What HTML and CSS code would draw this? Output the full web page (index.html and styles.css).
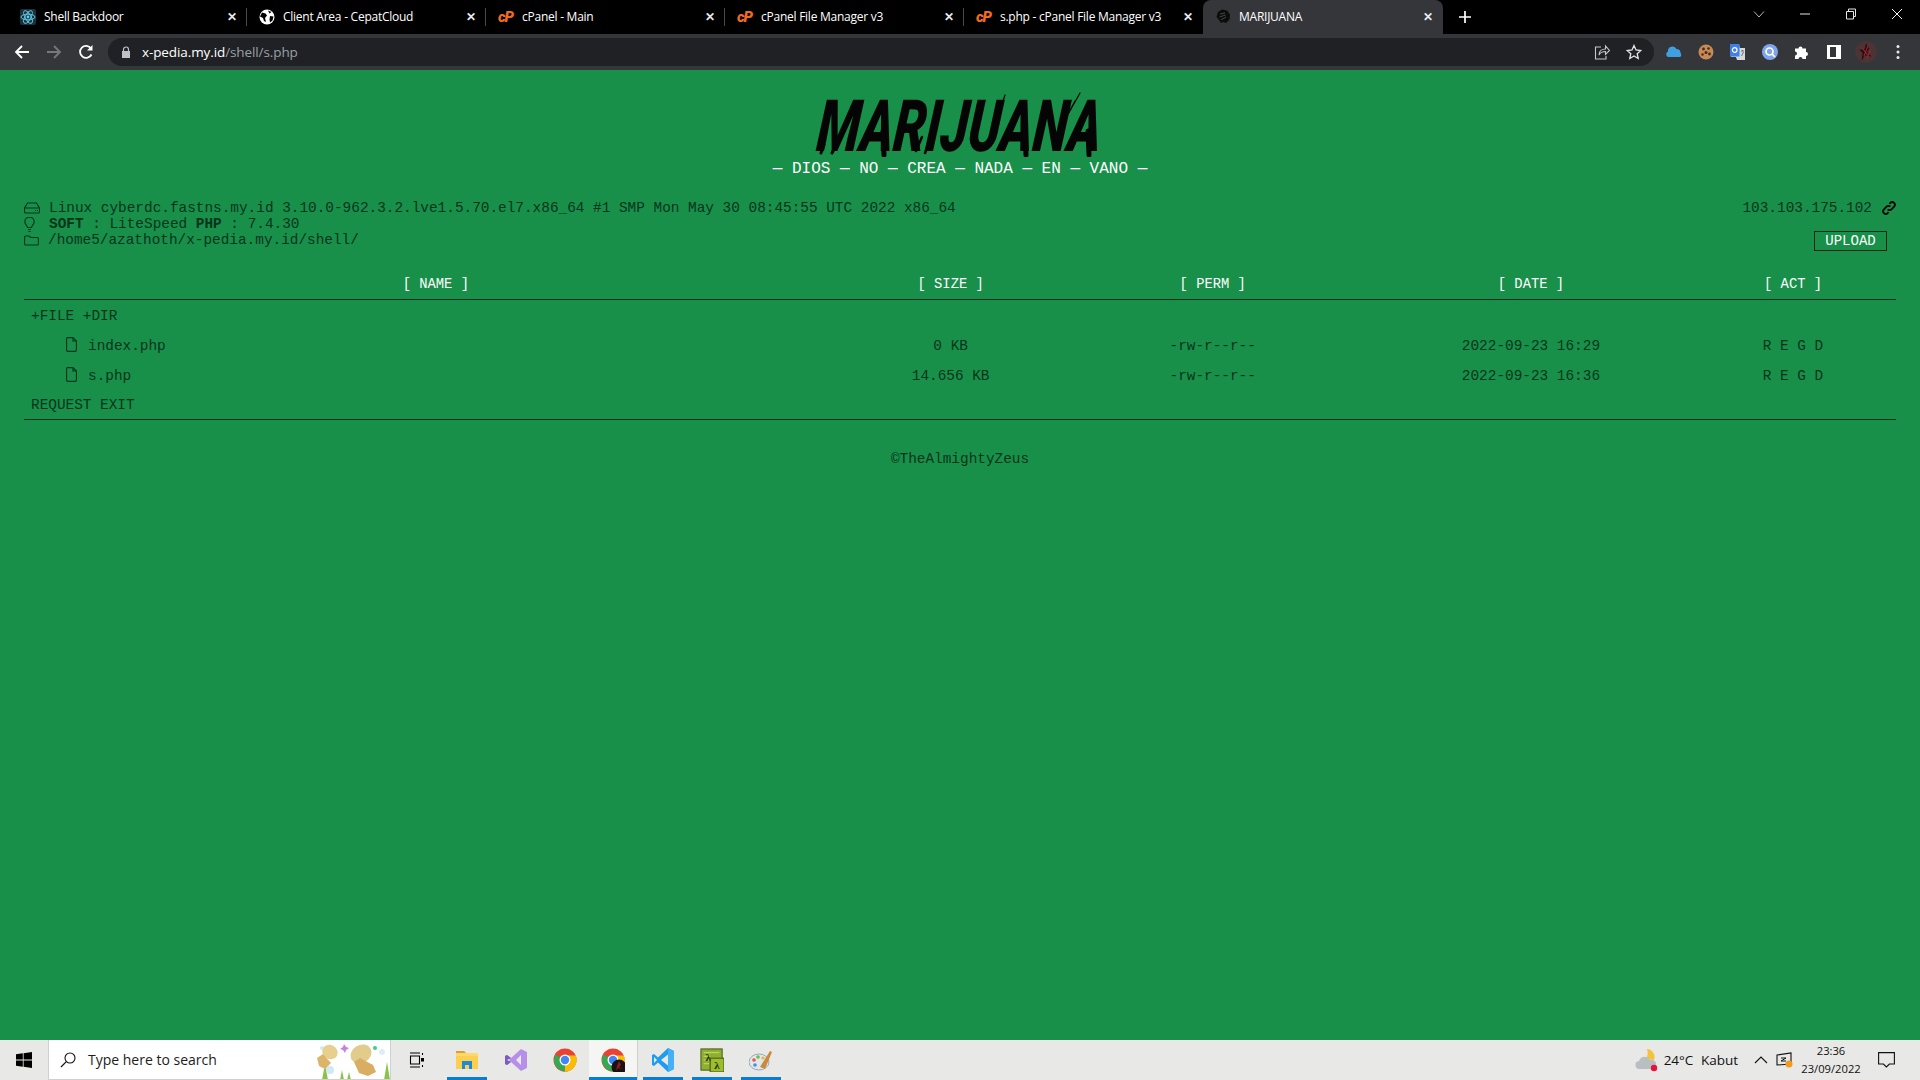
FILE: index.html
```html
<!DOCTYPE html>
<html lang="en">
<head>
<meta charset="utf-8">
<title>MARIJUANA</title>
<link rel="stylesheet" href="styles.css">
</head>
<body>
<div class="chrome">
  <div class="tabstrip">
    <div class="tab">
      <svg class="fav" viewBox="0 0 16 16"><rect width="16" height="16" rx="2" fill="#20303a"/><g fill="none" stroke="#5fd0ee" stroke-width=".9"><ellipse cx="8" cy="8" rx="7" ry="2.8"/><ellipse cx="8" cy="8" rx="7" ry="2.8" transform="rotate(60 8 8)"/><ellipse cx="8" cy="8" rx="7" ry="2.8" transform="rotate(120 8 8)"/></g><circle cx="8" cy="8" r="1.4" fill="#5fd0ee"/></svg>
      <span class="tab-title">Shell Backdoor</span><span class="tab-x">✕</span>
    </div>
    <div class="tab">
      <svg class="fav" viewBox="0 0 16 16"><circle cx="8" cy="8" r="7.5" fill="#fff"/><path d="M3 3.5l3.5 1 1.5 2-2 2.5 1 4-2-1-1-3-3-1.500zM9 1.500l3.500 1.500-2 1.500zM11 7l3.500 .5-1 4-2.500 2-.5-3z" fill="#000"/></svg>
      <span class="tab-title">Client Area - CepatCloud</span><span class="tab-x">✕</span>
    </div>
    <div class="tab">
      <span class="fav cp">cP</span>
      <span class="tab-title">cPanel - Main</span><span class="tab-x">✕</span>
    </div>
    <div class="tab">
      <span class="fav cp">cP</span>
      <span class="tab-title">cPanel File Manager v3</span><span class="tab-x">✕</span>
    </div>
    <div class="tab tab-last">
      <span class="fav cp">cP</span>
      <span class="tab-title">s.php - cPanel File Manager v3</span><span class="tab-x">✕</span>
    </div>
    <div class="tab tab-active">
      <svg class="fav" viewBox="0 0 16 16"><path d="M3 3l4-2.500 5 1 3 4-.5 5-3.500 3.500-3-1-2 1-2-3-2.500-3z" fill="#0c0c0c"/><path d="M5 5l5-1M4.500 8l6-2M6 11l5-3" stroke="#555" stroke-width=".8"/></svg>
      <span class="tab-title">MARIJUANA</span><span class="tab-x">✕</span>
    </div>
    <svg class="newtab" viewBox="0 0 12 12"><path d="M6 0v12M0 6h12" stroke="#fff" stroke-width="1.700"/></svg>
    <div class="winctl">
      <svg class="win-ico" viewBox="0 0 12 12"><path d="M1 3.500l5 5.500 5-5.500" fill="none" stroke="#c8c8c8" stroke-width=".9"/></svg>
      <svg class="win-ico" viewBox="0 0 12 12"><path d="M1 6h10" stroke="#e6e6e6" stroke-width="1"/></svg>
      <svg class="win-ico" viewBox="0 0 12 12"><path d="M1.500 3.500h7v7.500h-7zM3.500 3.500v-2.500h7v7.500h-2" fill="none" stroke="#e6e6e6" stroke-width="1"/></svg>
      <svg class="win-ico" viewBox="0 0 12 12"><path d="M1 1l10 10M11 1l-10 10" stroke="#f0f0f0" stroke-width="1"/></svg>
    </div>
  </div>
  <div class="toolbar">
    <svg class="nav-ico" viewBox="0 0 16 16"><path d="M15 8H2M8 2L2 8l6 6" fill="none" stroke="#fff" stroke-width="1.800"/></svg>
    <svg class="nav-ico" viewBox="0 0 16 16"><path d="M1 8h13M8 2l6 6-6 6" fill="none" stroke="#77787a" stroke-width="1.800"/></svg>
    <svg class="nav-ico" viewBox="0 0 16 16"><path d="M13.500 10.500A6 6 0 1 1 13 4.500" fill="none" stroke="#fff" stroke-width="1.800"/><path d="M14.500 1v5.500H9z" fill="#fff"/></svg>
    <div class="omnibox">
      <svg class="lock" viewBox="0 0 10 12"><path d="M2.500 5V3.500a2.500 2.500 0 0 1 5 0V5" fill="none" stroke="#bdc1c6" stroke-width="1.200"/><path d="M1 5h8v7H1z" fill="#bdc1c6"/></svg>
      <span class="url"><span class="url-host">x-pedia.my.id</span>/shell/s.php</span>
      <svg class="omni-ico omni-share" viewBox="0 0 16 16"><path d="M7 3H1.500v12H12v-3" fill="none" stroke="#c4c7c5" stroke-width="1.100"/><path d="M5 11c0-4 3-6 6.500-6V2l4 4.500-4 4V7.500C8.500 7.500 6 9 5 11z" fill="none" stroke="#c4c7c5" stroke-width="1.100"/></svg>
      <svg class="omni-ico" viewBox="0 0 16 16"><path d="M8 1.500l2 4.500 4.800 .5-3.600 3.200 1 4.800L8 12l-4.200 2.500 1-4.800L1.200 6.500 6 6z" fill="none" stroke="#e3e3e3" stroke-width="1.300"/></svg>
    </div>
    <div class="exts">
      <svg class="ext" viewBox="0 0 16 16"><path d="M2 13a3 3 0 0 1 0-5.500A4.500 4.500 0 0 1 10.500 5 4 4 0 0 1 14.500 9 2.500 2.500 0 0 1 14 13z" fill="#3f9fe0"/></svg>
      <svg class="ext" viewBox="0 0 16 16"><circle cx="8" cy="8" r="7.500" fill="#c68958"/><g fill="#4a2c18"><circle cx="5.500" cy="5" r="1.400"/><circle cx="10.500" cy="4.500" r="1.300"/><circle cx="8" cy="8.500" r="1.500"/><circle cx="4.500" cy="10.500" r="1.200"/><circle cx="11.500" cy="10" r="1.400"/></g></svg>
      <svg class="ext" viewBox="0 0 16 16"><path d="M1 1h8l1 3h5v12H7l-1-3H1z" fill="#d5d8da"/><path d="M0 0h9.500v12.500H0z" fill="#3f7fe8"/><circle cx="4.700" cy="6" r="2.300" fill="none" stroke="#fff" stroke-width="1.200"/><path d="M11 7h3M12.500 6v1M11.500 12l2-4" stroke="#666" stroke-width=".9"/></svg>
      <svg class="ext" viewBox="0 0 16 16"><circle cx="8" cy="8" r="8" fill="#7ea4ee"/><circle cx="7.500" cy="7.500" r="3.500" fill="none" stroke="#fff" stroke-width="1.700"/><path d="M10 10l3 3" stroke="#fff" stroke-width="1.700"/></svg>
      <svg class="ext" viewBox="0 0 16 16"><path d="M1 4.500h3.500a2 2 0 1 1 4 0H12V8a2 2 0 1 1 0 4v3H8.500a2 2 0 1 0-4 0H1v-3.500a2 2 0 1 0 0-4z" fill="#fff"/></svg>
      <svg class="ext" viewBox="0 0 16 16"><path d="M1 1h14v14H1z" fill="#fff"/><path d="M4 3h6v10H4z" fill="#35363a"/></svg>
      <svg class="ext ext-avatar" viewBox="0 0 20 20"><circle cx="10" cy="10" r="10" fill="#4a3436"/><path d="M10 2l3 5-2 3 4 4-6-1-3 5 1-7-3-3 5-1z" fill="#2a0c10"/><path d="M12 4l-4 10M6 6l6 7M14 8l-3 8" stroke="#a0242c" stroke-width="1"/></svg>
      <svg class="ext ext-dots" viewBox="0 0 4 16"><g fill="#e8eaed"><circle cx="2" cy="2.500" r="1.500"/><circle cx="2" cy="8" r="1.500"/><circle cx="2" cy="13.500" r="1.500"/></g></svg>
    </div>
  </div>
</div>

<main class="page">
  <header class="brand">
    <div class="logo-wrap">
      <h1 class="logo">MARIJUANA</h1>
      <svg class="streaks" viewBox="0 0 300 70">
        <g fill="none" stroke="#050505" stroke-linecap="round">
          <path d="M14 58l-3 8M26 58l-4 8" stroke-width="3"/>
          <path d="M73 44l1 24" stroke-width="5"/>
          <path d="M123 46l-8 20M112 50l-6 14" stroke-width="2.500"/>
          <path d="M195 8l-12 36M191 14l-9 28" stroke-width="1.200"/>
          <path d="M215 44l1 24" stroke-width="5"/>
          <path d="M278 44l1 24" stroke-width="5"/>
          <path d="M270 6l-18 32M265 14l-12 22" stroke-width="1.200"/>
        </g>
      </svg>
    </div>
    <p class="tagline">— DIOS — NO — CREA — NADA — EN — VANO —</p>
  </header>

  <section class="info">
    <div class="info-left">
      <div class="info-line">
        <svg class="i-hdd" viewBox="0 0 16 12"><path d="M3.500 1h9l3 5v4a1 1 0 0 1-1 1H1.500a1 1 0 0 1-1-1V6zM.5 6h15" fill="none" stroke="#06351b" stroke-width="1.100"/><path d="M11 8.500h1M13 8.500h1" stroke="#06351b"/></svg>
        <span>Linux cyberdc.fastns.my.id 3.10.0-962.3.2.lve1.5.70.el7.x86_64 #1 SMP Mon May 30 08:45:55 UTC 2022 x86_64</span>
      </div>
      <div class="info-line">
        <svg class="i-bulb" viewBox="0 0 11 15"><path d="M3.500 10.500C3 8 .8 7.500.8 4.800a4.700 4.700 0 0 1 9.400 0c0 2.700-2.200 3.200-2.700 5.700zM4 12.500h3M4.500 14.500h2" fill="none" stroke="#06351b" stroke-width="1.100"/></svg>
        <span><b>SOFT</b> : LiteSpeed <b>PHP</b> : 7.4.30</span>
      </div>
      <div class="info-line">
        <svg class="i-folder" viewBox="0 0 15 11"><path d="M.6 2a1 1 0 0 1 1-1h3.500l1.500 1.500h6.800a1 1 0 0 1 1 1v5.500a1 1 0 0 1-1 1H1.600a1 1 0 0 1-1-1z" fill="none" stroke="#06351b" stroke-width="1.100"/></svg>
        <span class="path">/home5/azathoth/x-pedia.my.id/shell/</span>
      </div>
    </div>
    <div class="info-right">
      <div class="ip">103.103.175.102
        <svg class="i-link" viewBox="0 0 16 16"><g fill="none" stroke="#000" stroke-width="2"><path d="M6.500 9.500a3 3 0 0 0 4.300 0l3-3a3 3 0 0 0-4.300-4.300l-1 1"/><path d="M9.500 6.500a3 3 0 0 0-4.300 0l-3 3a3 3 0 0 0 4.300 4.300l1-1"/></g></svg>
      </div>
      <button class="upload">UPLOAD</button>
    </div>
  </section>

  <table class="files">
    <thead>
      <tr>
        <th class="c-name">[ NAME ]</th>
        <th class="c-size">[ SIZE ]</th>
        <th class="c-perm">[ PERM ]</th>
        <th class="c-date">[ DATE ]</th>
        <th class="c-act">[ ACT ]</th>
      </tr>
    </thead>
    <tbody>
      <tr><td class="left" colspan="5">+FILE +DIR</td></tr>
      <tr>
        <td class="left"><span class="fname"><svg class="i-file" viewBox="0 0 11 15"><path d="M1.500.6h5.500l3.400 3.400v9a1.400 1.400 0 0 1-1.400 1.400H1.500A1.400 1.400 0 0 1 .6 13V1.500A1 1 0 0 1 1.500.6zM7 .6V4h3.400" fill="none" stroke="#06351b" stroke-width="1.100"/></svg>index.php</span></td>
        <td>0 KB</td><td>-rw-r--r--</td><td>2022-09-23 16:29</td><td>R E G D</td>
      </tr>
      <tr>
        <td class="left"><span class="fname"><svg class="i-file" viewBox="0 0 11 15"><path d="M1.500.6h5.500l3.400 3.400v9a1.400 1.400 0 0 1-1.400 1.400H1.500A1.400 1.400 0 0 1 .6 13V1.500A1 1 0 0 1 1.500.6zM7 .6V4h3.400" fill="none" stroke="#06351b" stroke-width="1.100"/></svg>s.php</span></td>
        <td>14.656 KB</td><td>-rw-r--r--</td><td>2022-09-23 16:36</td><td>R E G D</td>
      </tr>
      <tr><td class="left" colspan="5">REQUEST EXIT</td></tr>
    </tbody>
  </table>

  <footer class="credit">©TheAlmightyZeus</footer>
</main>

<div class="taskbar">
  <div class="start"><svg class="win-logo" viewBox="0 0 16 16"><path d="M0 2.300l6.800-1v6.200H0zM7.600 1.200L16 0v7.500H7.600zM0 8.400h6.800v6.300l-6.800-1zM7.600 8.400H16V16l-8.400-1.200z" fill="#000"/></svg></div>
  <div class="search">
    <svg class="search-ico" viewBox="0 0 16 16"><circle cx="10" cy="6" r="5" fill="none" stroke="#111" stroke-width="1.100"/><path d="M6.300 9.700L1 15" stroke="#111" stroke-width="1.200"/></svg>
    <span class="search-text">Type here to search</span>
    <svg class="doodle" viewBox="0 0 76 40">
      <path d="M8 40l3-16 3 16zM70 40l3-18 3 18zM26 40l2-10 2 10zM33 40l2-8 2 8z" fill="#8bc34a"/>
      <circle cx="16" cy="30" r="4" fill="#cfe9f5"/><circle cx="8" cy="8" r="2" fill="#cfe9f5"/><circle cx="68" cy="12" r="3" fill="#dbeef8"/><circle cx="61" cy="8" r="2" fill="#3fd080"/>
      <path d="M30 4l2 3 3 1-3 2-1 3-2-3-3-1 3-2z" fill="#c77ee0"/>
      <ellipse cx="16" cy="12" rx="8" ry="7" fill="#e7d08f" transform="rotate(30 16 12)"/>
      <path d="M3 18l6-4 8 9-6 6-6-3zM9 24l5 2" fill="#dcb56a"/>
      <ellipse cx="47" cy="14" rx="11" ry="9" fill="#e2cc8c" transform="rotate(-30 47 14)"/>
      <path d="M40 22l6-4 13 7 3 7-8 4-9-3z" fill="#d9ae62"/>
    </svg>
  </div>
  <div class="tasks">
    <div class="task task-plain"><svg class="task-ico" viewBox="0 0 16 16"><path d="M2 1h10M2 15h10M2.500 4h9v8h-9zM14.500 1v2M14.500 13v2" fill="none" stroke="#000" stroke-width="1.100"/><rect x="13" y="6" width="3" height="3.500" fill="#000"/></svg></div>
    <div class="task task-on"><svg class="task-ico ico-big" viewBox="0 0 24 24"><path d="M1 3h8l2 2h12v16H1z" fill="#ffd76a"/><path d="M1 3h8l2 2H1z" fill="#d9a033"/><path d="M1 8h22v13H1z" fill="#fbd04f"/><path d="M7 21v-8h10v8h-3v-4h-4v4z" fill="#1e8ad6"/></svg></div>
    <div class="task"><svg class="task-ico ico-big" viewBox="0 0 24 24"><path d="M17 1l6 3v16l-6 3-10-9-4 3-2-1V8l2-1 4 3z" fill="#b88fe8"/><path d="M17 7l-5 5 5 5zM3 9v6l3-3z" fill="#e8e8e6"/><path d="M1 8l2-1 4 3-4 2 4 2-4 3-2-1z" fill="#7d5cc0"/></svg></div>
    <div class="task"><svg class="task-ico ico-big" viewBox="0 0 24 24"><circle cx="12" cy="12" r="11.500" fill="#e94235"/><path d="M12 12L2.400 6.500A11.500 11.500 0 0 0 12 23.500z" fill="#34a853"/><path d="M12 12v11.500A11.500 11.500 0 0 0 22.700 7.500H12z" fill="#fbbc04"/><circle cx="12" cy="12" r="5.500" fill="#fff"/><circle cx="12" cy="12" r="4.200" fill="#4285f4"/></svg></div>
    <div class="task task-active"><svg class="task-ico ico-big" viewBox="0 0 24 24"><circle cx="12" cy="12" r="11.500" fill="#e94235"/><path d="M12 12L2.400 6.500A11.500 11.500 0 0 0 12 23.500z" fill="#34a853"/><path d="M12 12v11.500A11.500 11.500 0 0 0 22.700 7.500H12z" fill="#fbbc04"/><circle cx="12" cy="12" r="5.500" fill="#fff"/><circle cx="12" cy="12" r="4.200" fill="#4285f4"/><circle cx="18" cy="19" r="7.500" fill="#1b1113"/><path d="M18 13l2 4-2 2 3 2-4-1-2 3 1-5z" fill="#8a1c24"/></svg></div>
    <div class="task task-on"><svg class="task-ico ico-big" viewBox="0 0 24 24"><path d="M17 0l6 3v18l-6 3L7 14.500 3 18l-2-1V7l2-1 4 3.500z" fill="#1f9cf0"/><path d="M17 6.500L10 12l7 5.500z" fill="#e8e8e6"/><path d="M3 9v6l3-3z" fill="#e8e8e6"/><path d="M17 0l6 3v18l-6 3z" fill="#45b0f5"/></svg></div>
    <div class="task task-on"><svg class="task-ico ico-big" viewBox="0 0 26 26"><rect x="1" y="1" width="23" height="23" fill="#8fb02c" stroke="#3f4d18"/><path d="M4 5h17M4 9h7M4 13h6M4 17h6" stroke="#c9dc72"/><rect x="11" y="11" width="15" height="15" fill="#9bbd2f" stroke="#3f4d18"/><text x="18.500" y="23" class="lambda">λ</text><text x="9" y="14" class="lambda">λ</text></svg></div>
    <div class="task task-on"><svg class="task-ico ico-big" viewBox="0 0 24 24"><ellipse cx="10" cy="14" rx="10" ry="8" fill="#dfe7ec" stroke="#9ab"/><circle cx="5" cy="12" r="1.800" fill="#e25a4a"/><circle cx="9" cy="9" r="1.800" fill="#7ab648"/><circle cx="14" cy="10" r="1.600" fill="#e8b23c"/><circle cx="6" cy="17" r="1.800" fill="#4a90d9"/><path d="M11 19L21 3l2 1-7 17z" fill="#c98a3c"/></svg></div>
  </div>
  <div class="tray">
    <svg class="weather" viewBox="0 0 24 24"><path d="M12 1a8 8 0 0 1 7 11l-8-1c2-3 2-7 1-10z" fill="#f5c33b"/><path d="M5 21a4 4 0 0 1-1-8 6 6 0 0 1 11-1 4.500 4.500 0 0 1 3 9z" fill="#b9bfc0"/><circle cx="19" cy="20" r="3.200" fill="#e8133c"/></svg>
    <span class="temp">24°C</span>
    <span class="cond">Kabut</span>
    <svg class="chev" viewBox="0 0 14 8"><path d="M1 7l6-6 6 6" fill="none" stroke="#111" stroke-width="1.100"/></svg>
    <svg class="net" viewBox="0 0 18 16"><path d="M1 3l14-2v11L1 13z" fill="none" stroke="#111" stroke-width="1.100"/><path d="M5 6h5L5 9h5" fill="none" stroke="#111"/><circle cx="13" cy="12" r="3.500" fill="#f39a1c"/></svg>
    <div class="clock"><span>23:36</span><span>23/09/2022</span></div>
    <svg class="notif" viewBox="0 0 17 16"><path d="M.6.6h15.800v11.400h-5l-3 3-3-3H.6z" fill="none" stroke="#111" stroke-width="1.100"/></svg>
  </div>
</div>
</body>
</html>
```

FILE: styles.css
```css
* { box-sizing: border-box; }
html, body { margin: 0; height: 100%; }
body {
  width: 1920px;
  height: 1080px;
  overflow: hidden;
  display: flex;
  flex-direction: column;
  background: #18904a;
  font-family: "Liberation Mono", "Courier New", monospace;
  font-size: 14.4px;
  color: #06351b;
}

/* browser chrome */
.chrome { flex: none; height: 70px; font-family: "Open Sans", "Noto Sans", sans-serif; }
.tabstrip { height: 34px; background: #000; display: flex; align-items: center; padding-left: 8px; }
.tab {
  position: relative;
  flex: none;
  width: 239px;
  height: 34px;
  display: flex;
  align-items: center;
  padding-left: 12px;
  padding-bottom: 1px;
  color: #fff;
  font-size: 12px;
}
.tab::after {
  content: "";
  position: absolute;
  right: 0;
  top: 8px;
  height: 18px;
  width: 1px;
  background: #4a4a4a;
}
.tab-last::after, .tab-active::after { display: none; }
.tab-active { background: #35363a; border-radius: 8px 8px 0 0; width: 240px; }
.fav { flex: none; width: 16px; height: 16px; margin-right: 8px; }
.cp {
  display: block;
  font-family: "Roboto", sans-serif;
  font-weight: 900;
  font-style: italic;
  font-size: 15px;
  line-height: 16px;
  letter-spacing: -1px;
  color: #f26a21;
}
.tab-title { flex: 1; white-space: nowrap; overflow: hidden; letter-spacing: -.25px; }
.tab-x { flex: none; width: 14px; margin-right: 8px; font-size: 12px; font-weight: 700; text-align: center; color: #e8eaed; }
.newtab { flex: none; width: 12px; height: 12px; margin-left: 16px; }
.winctl { margin-left: auto; display: flex; align-self: flex-start; padding-top: 8px; padding-right: 17px; gap: 34px; }
.win-ico { width: 12px; height: 12px; display: block; }

.toolbar { height: 36px; background: #35363a; display: flex; align-items: center; padding-left: 14px; }
.nav-ico { flex: none; width: 16px; height: 16px; margin-right: 16px; }
.omnibox {
  flex: none;
  width: 1546px;
  height: 28px;
  margin-left: -2px;
  border-radius: 14px;
  background: #202124;
  display: flex;
  align-items: center;
  padding: 0 12px 0 13px;
  color: #9aa0a6;
  font-size: 13.5px;
}
.lock { width: 10px; height: 12px; margin-right: 11px; flex: none; }
.url { flex: 1; letter-spacing: -.1px; }
.url-host { color: #fff; }
.omni-ico { width: 16px; height: 16px; flex: none; }
.omni-share { margin-right: 16px; }
.exts { display: flex; align-items: center; margin-left: 12px; gap: 16px; }
.ext { width: 16px; height: 16px; flex: none; }
.ext-avatar { width: 22px; height: 22px; margin: 0 -3px; }
.ext-dots { width: 4px; margin-left: 6px; }

/* page */
.page { flex: 1; padding: 0 24px; min-height: 0; }
.brand { text-align: center; height: 111px; padding-top: 25px; }
.logo-wrap { position: relative; width: 300px; height: 64px; margin: 0 auto; display: flex; justify-content: center; }
.logo {
  flex: none;
  margin: 0;
  height: 64px;
  font-family: "Roboto", sans-serif;
  font-weight: 900;
  font-style: italic;
  font-size: 72px;
  line-height: 64px;
  white-space: nowrap;
  color: #050505;
  transform: scaleX(.7) skewX(-8deg);
}
.streaks { position: absolute; left: 0; top: -8px; width: 300px; height: 70px; }
.tagline {
  margin: 0;
  font-size: 16px;
  line-height: 20px;
  color: #fff;
}
.info { display: flex; justify-content: space-between; height: 84px; padding-top: 19px; }
.info-line { display: flex; align-items: center; height: 16px; white-space: nowrap; }
.i-hdd { width: 16px; height: 12px; margin-right: 9px; flex: none; }
.i-bulb { width: 11px; height: 15px; margin-right: 14px; flex: none; }
.i-folder { width: 15px; height: 11px; margin-right: 9px; flex: none; }
.info-right { display: flex; flex-direction: column; align-items: flex-end; }
.ip { display: flex; align-items: center; gap: 10px; height: 16px; }
.i-link { width: 14px; height: 14px; }
.upload {
  margin: 15px 9px 0 0;
  width: 73px;
  height: 20px;
  padding: 0;
  background: transparent;
  border: 1px solid #0b2a17;
  color: #fff;
  font-family: "Liberation Mono", "Courier New", monospace;
  font-size: 14px;
  line-height: 1;
}
.files { width: 1872px; border-collapse: collapse; table-layout: fixed; }
.files thead tr { border-bottom: 1px solid #06291a; }
.files tbody { border-bottom: 1px solid #06291a; }
.files th {
  height: 34px;
  padding: 6px 0 0;
  font-size: 13.8px;
  font-weight: 400;
  color: #fff;
}
.files td { height: 30px; padding: 3px 0 0; text-align: center; white-space: nowrap; }
.files td.left { text-align: left; padding-left: 7px; }
.c-name { width: 44%; }
.c-size { width: 11%; }
.c-perm { width: 17%; }
.c-date { width: 17%; }
.c-act { width: 11%; }
.fname { display: flex; align-items: center; padding-left: 35px; }
.i-file { width: 11px; height: 15px; margin-right: 11px; margin-top: -2px; flex: none; }
.credit { text-align: center; margin-top: 31px; line-height: 16px; }

/* taskbar */
.taskbar {
  flex: none;
  height: 40px;
  background: #e8e8e6;
  display: flex;
  align-items: stretch;
  font-family: "Open Sans", "Noto Sans", sans-serif;
  color: #111;
}
.start { width: 48px; flex: none; display: flex; align-items: center; justify-content: center; }
.win-logo { width: 16px; height: 16px; }
.search {
  flex: none;
  width: 343px;
  background: #fff;
  border: 1px solid #d0d0d0;
  border-top: 0;
  display: flex;
  align-items: center;
  padding-left: 11px;
  overflow: hidden;
}
.search-ico { width: 16px; height: 16px; flex: none; }
.search-text { margin-left: 12px; flex: 1; font-size: 14px; color: #1d1d1d; white-space: nowrap; }
.doodle { width: 76px; height: 40px; flex: none; }
.tasks { display: flex; }
.task {
  position: relative;
  flex: none;
  width: 49px;
  display: flex;
  align-items: center;
  justify-content: center;
}
.task-plain { width: 51px; padding-right: 2px; }
.task-on::after, .task-active::after {
  content: "";
  position: absolute;
  left: 5px;
  right: 4px;
  bottom: 0;
  height: 3px;
  background: #0a7cd6;
}
.task-active { background: #f5f5f4; border-right: 1px solid #cfcfcf; }
.task-active::after { left: 0; right: 0; }
.task-ico { width: 16px; height: 16px; }
.ico-big { width: 24px; height: 24px; }
.lambda { font: 700 12px "Liberation Serif", serif; text-anchor: middle; fill: #26300c; }
.tray { margin-left: auto; display: flex; align-items: center; padding-right: 25px; font-size: 13.5px; }
.weather { width: 24px; height: 24px; }
.temp { margin-left: 5px; }
.cond { margin-left: 7.5px; }
.chev { width: 14px; height: 8px; margin-left: 16px; }
.net { width: 18px; height: 16px; margin-left: 8px; }
.clock {
  display: flex;
  flex-direction: column;
  align-items: center;
  width: 64px;
  margin-left: 5px;
  font-size: 11.2px;
  line-height: 18px;
}
.notif { width: 17px; height: 16px; margin-left: 15px; }
```
